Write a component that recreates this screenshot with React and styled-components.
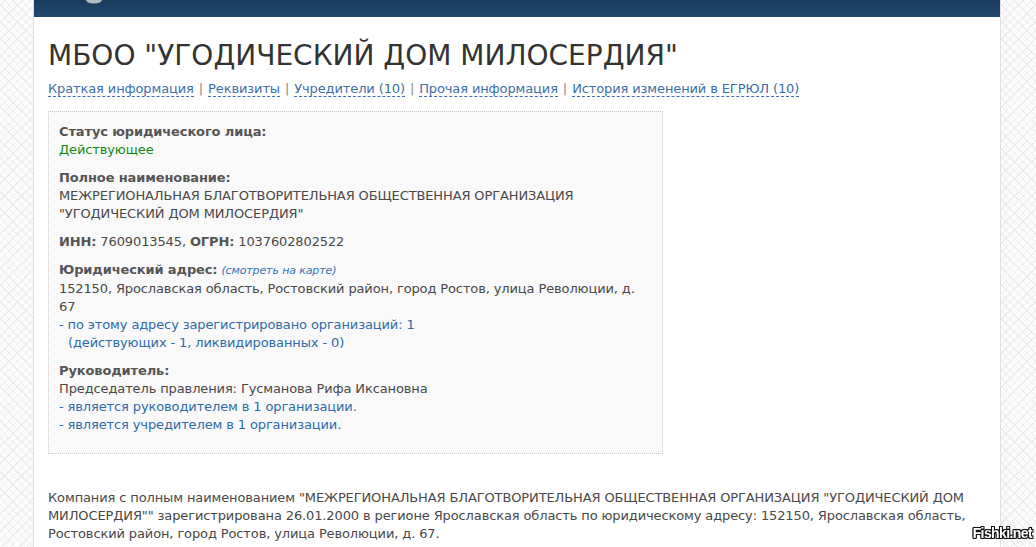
import React from "react";
import styled, { createGlobalStyle } from "styled-components";

const GlobalStyle = createGlobalStyle`
  html, body {
    margin: 0;
    padding: 0;
  }
  body {
    font-family: "DejaVu Sans", Verdana, sans-serif;
    font-size: 13px;
    letter-spacing: -0.12px;
    color: #484848;
    background-color: #fbfbfb;
    background-image:
      repeating-linear-gradient(45deg, transparent 0 5px, #ececec 5px 6px),
      repeating-linear-gradient(-45deg, transparent 0 5px, #ececec 5px 6px);
  }
`;

const Page = styled.div`
  width: 968px;
  margin: 0 0 0 33px;
  min-height: 547px;
  background: #fff;
  border-left: 1px solid #e0e0e0;
  border-right: 1px solid #e0e0e0;
  box-sizing: border-box;
`;

const TopBar = styled.div`
  height: 17px;
  background: linear-gradient(#1c3c5e, #234a70);
  position: relative;
`;

const Logo = styled.svg`
  position: absolute;
  left: 50px;
  top: 0;
`;

const Content = styled.div`
  padding: 21px 14px 0 14px;
`;

const Title = styled.h1`
  margin: 0;
  font-weight: normal;
  font-size: 28px;
  line-height: 36px;
  color: #333;
  letter-spacing: 0;
`;

const Nav = styled.div`
  margin-top: 6px;
  line-height: 18px;
  color: #999;
`;

const NavLink = styled.a`
  color: #3d6ea8;
  text-decoration: none;
  border-bottom: 1px dashed #3d6ea8;
`;

const Sep = styled.span`
  margin: 0 5px;
  color: #888;
`;

const InfoBox = styled.div`
  margin-top: 13px;
  width: 615px;
  box-sizing: border-box;
  background: #f9f9f9;
  border: 1px dotted #c8c8c8;
  padding: 11px 10px 9px;
`;

const Block = styled.div`
  line-height: 18px;
  margin-bottom: 10px;
`;

const Label = styled.b`
  color: #555;
`;

const Green = styled.div`
  color: #128a12;
`;

const Blue = styled.div`
  color: #2f6ba8;
  padding-left: ${(p) => (p.$indent ? "9px" : "0")};
`;

const MapLink = styled.i`
  color: #3a73b0;
  font-size: 11px;
  margin-left: 4px;
  font-weight: normal;
`;

const Summary = styled.p`
  margin: 35px 0 0;
  line-height: 18px;
`;

const Watermark = styled.div`
  position: fixed;
  right: 4px;
  bottom: 6px;
  font-family: "Liberation Sans", Arial, sans-serif;
  font-weight: bold;
  font-size: 14px;
  letter-spacing: -0.6px;
  color: #fff;
  text-shadow:
    -1px -1px 0 #111, 1px -1px 0 #111, -1px 1px 0 #111, 1px 1px 0 #111,
    0 1px 0 #111, 0 -1px 0 #111, 1px 0 0 #111, -1px 0 0 #111;
`;

export default function App() {
  const links = [
    "Краткая информация",
    "Реквизиты",
    "Учредители (10)",
    "Прочая информация",
    "История изменений в ЕГРЮЛ (10)",
  ];
  return (
    <>
      <GlobalStyle />
      <Page>
        <TopBar>
          <Logo width="20" height="5" viewBox="0 0 20 5">
            <ellipse cx="10" cy="0" rx="8" ry="3.5" fill="#b9bcc0" />
          </Logo>
        </TopBar>
        <Content>
          <Title>МБОО "УГОДИЧЕСКИЙ ДОМ МИЛОСЕРДИЯ"</Title>
          <Nav>
            {links.map((l, i) => (
              <React.Fragment key={l}>
                {i > 0 && <Sep>|</Sep>}
                <NavLink>{l}</NavLink>
              </React.Fragment>
            ))}
          </Nav>
          <InfoBox>
            <Block>
              <Label>Статус юридического лица:</Label>
              <Green>Действующее</Green>
            </Block>
            <Block>
              <Label>Полное наименование:</Label>
              <div>
                МЕЖРЕГИОНАЛЬНАЯ БЛАГОТВОРИТЕЛЬНАЯ ОБЩЕСТВЕННАЯ ОРГАНИЗАЦИЯ
                <br />
                "УГОДИЧЕСКИЙ ДОМ МИЛОСЕРДИЯ"
              </div>
            </Block>
            <Block>
              <Label>ИНН:</Label> 7609013545, <Label>ОГРН:</Label> 1037602802522
            </Block>
            <Block>
              <Label>Юридический адрес:</Label>
              <MapLink>(смотреть на карте)</MapLink>
              <div>
                152150, Ярославская область, Ростовский район, город Ростов,
                улица Революции, д. 67
              </div>
              <Blue>- по этому адресу зарегистрировано организаций: 1</Blue>
              <Blue $indent>(действующих - 1, ликвидированных - 0)</Blue>
            </Block>
            <Block>
              <Label>Руководитель:</Label>
              <div>Председатель правления: Гусманова Рифа Иксановна</div>
              <Blue>- является руководителем в 1 организации.</Blue>
              <Blue>- является учредителем в 1 организации.</Blue>
            </Block>
          </InfoBox>
          <Summary>
            Компания с полным наименованием "МЕЖРЕГИОНАЛЬНАЯ БЛАГОТВОРИТЕЛЬНАЯ
            ОБЩЕСТВЕННАЯ ОРГАНИЗАЦИЯ "УГОДИЧЕСКИЙ ДОМ МИЛОСЕРДИЯ"" зарегистрирована
            26.01.2000 в регионе Ярославская область по юридическому адресу:
            152150, Ярославская область, Ростовский район, город Ростов, улица
            Революции, д. 67.
          </Summary>
        </Content>
      </Page>
      <Watermark>Fishki.net</Watermark>
    </>
  );
}
